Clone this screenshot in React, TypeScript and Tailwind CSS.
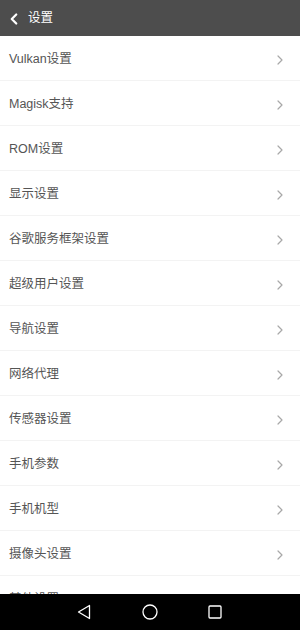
import { ChevronRight, ChevronLeft } from "lucide-react";

const items = [
  "Vulkan设置",
  "Magisk支持",
  "ROM设置",
  "显示设置",
  "谷歌服务框架设置",
  "超级用户设置",
  "导航设置",
  "网络代理",
  "传感器设置",
  "手机参数",
  "手机机型",
  "摄像头设置",
  "其他设置",
];

export default function App() {
  return (
    <div
      className="flex h-[630px] w-[300px] flex-col overflow-hidden bg-white"
      style={{ fontFamily: '"Liberation Sans", "Noto Sans CJK SC", sans-serif' }}
    >
      {/* Header */}
      <div className="flex h-[36px] shrink-0 items-center bg-[#4d4d4d] pl-[5px] pt-[1px] text-white">
        <ChevronLeft size={18} strokeWidth={3} />
        <span className="ml-[5px] text-[12.5px]">设置</span>
      </div>

      {/* List */}
      <div className="flex-1 overflow-hidden">
        {items.map((label) => (
          <div
            key={label}
            className="flex h-[45px] items-center justify-between border-b border-[#f3f3f3] pl-[9px] pr-[12px] pt-[3px]"
          >
            <span className="text-[12.5px] text-[#555555]">{label}</span>
            <ChevronRight size={16} strokeWidth={1.8} className="text-[#a8a8a8]" />
          </div>
        ))}
      </div>

      {/* Nav bar */}
      <div className="flex h-[36px] shrink-0 items-center justify-center gap-[50px] bg-black pr-[2px]">
        <svg width="16" height="16" viewBox="0 0 16 16" fill="none" stroke="white" strokeWidth="1.3">
          <path d="M13.5 1.5 L2.5 8 L13.5 14.5 Z" strokeLinejoin="round" />
        </svg>
        <svg width="16" height="16" viewBox="0 0 16 16" fill="none" stroke="white" strokeWidth="1.3">
          <circle cx="8" cy="8" r="7" />
        </svg>
        <svg width="14" height="14" viewBox="0 0 14 14" fill="none" stroke="white" strokeWidth="1.3">
          <rect x="1" y="1" width="12" height="12" rx="1" />
        </svg>
      </div>
    </div>
  );
}
